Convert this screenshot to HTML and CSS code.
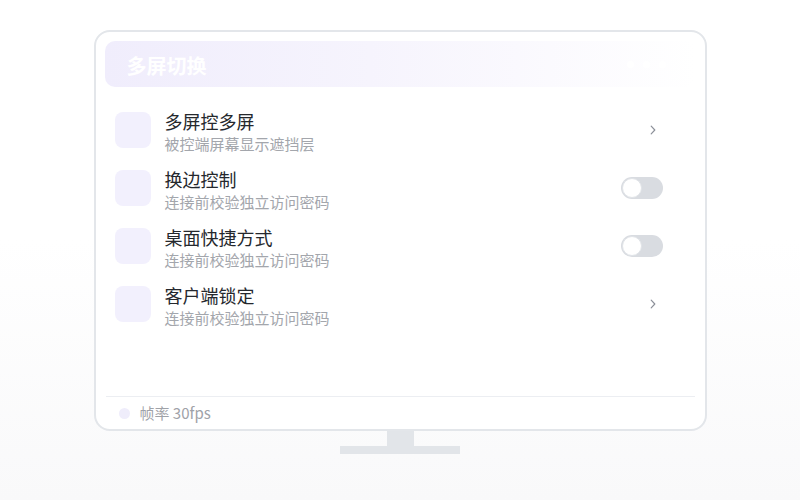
FILE: index.html
```html
<!DOCTYPE html>
<html lang="zh-CN">
<head>
<meta charset="utf-8">
<title>多屏切换</title>
<link rel="stylesheet" href="styles.css">
</head>
<body>
<div class="stage">
  <div class="monitor">
    <div class="titlebar">
      <span class="title">多屏切换</span>
      <span class="dots"><i></i><i></i><i></i></span>
    </div>
    <div class="list">
      <div class="row">
        <div class="icon"></div>
        <div class="text">
          <div class="name">多屏控多屏</div>
          <div class="desc">被控端屏幕显示遮挡层</div>
        </div>
        <svg class="chev" width="6" height="10" viewBox="0 0 6 10"><polyline points="1.2,1.2 4.8,5 1.2,8.8" fill="none" stroke="#8c9099" stroke-width="1.2" stroke-linecap="round" stroke-linejoin="round"/></svg>
      </div>
      <div class="row">
        <div class="icon"></div>
        <div class="text">
          <div class="name">换边控制</div>
          <div class="desc">连接前校验独立访问密码</div>
        </div>
        <div class="toggle"><span class="knob"></span></div>
      </div>
      <div class="row">
        <div class="icon"></div>
        <div class="text">
          <div class="name">桌面快捷方式</div>
          <div class="desc">连接前校验独立访问密码</div>
        </div>
        <div class="toggle"><span class="knob"></span></div>
      </div>
      <div class="row">
        <div class="icon"></div>
        <div class="text">
          <div class="name">客户端锁定</div>
          <div class="desc">连接前校验独立访问密码</div>
        </div>
        <svg class="chev" width="6" height="10" viewBox="0 0 6 10"><polyline points="1.2,1.2 4.8,5 1.2,8.8" fill="none" stroke="#8c9099" stroke-width="1.2" stroke-linecap="round" stroke-linejoin="round"/></svg>
      </div>
    </div>
    <div class="footer">
      <span class="fdot"></span>
      <span class="ftext">帧率 30fps</span>
    </div>
  </div>
  <div class="neck"></div>
  <div class="base"></div>
</div>
</body>
</html>
```
FILE: styles.css
```css
* { box-sizing: border-box; }
html, body { margin: 0; padding: 0; }
body {
  width: 800px;
  height: 500px;
  background: linear-gradient(180deg, #ffffff 0%, #ffffff 48%, #f9f9fa 100%);
  font-family: "Noto Sans CJK SC", "Noto Sans", sans-serif;
  overflow: hidden;
}
.stage {
  display: flex;
  flex-direction: column;
  align-items: center;
  padding-top: 30px;
}
.monitor {
  width: 613px;
  height: 401px;
  background: #ffffff;
  border: 2px solid #e3e6ea;
  border-radius: 16px;
  padding: 9px 9px 0;
  display: flex;
  flex-direction: column;
}
.titlebar {
  height: 46px;
  border-radius: 10px;
  background: linear-gradient(90deg, #f0edfc 0%, #f6f4fd 45%, #ffffff 100%);
  display: flex;
  align-items: center;
  justify-content: space-between;
  padding: 0 22px;
}
.title {
  color: #ffffff;
  font-size: 20px;
  font-weight: 700;
  line-height: 46px;
  padding-top: 4px;
}
.dots { display: flex; gap: 9px; padding-right: 8px; }
.dots i {
  display: block;
  width: 7px;
  height: 7px;
  border-radius: 50%;
  background: #ffffff;
}
.list {
  margin-top: 17px;
  display: flex;
  flex-direction: column;
}
.row {
  height: 58px;
  padding: 6px 33px 8px 10px;
  display: flex;
  align-items: flex-start;
}
.icon {
  width: 36px;
  height: 36px;
  border-radius: 8px;
  background: #f2f0fd;
  margin-top: 2px;
  flex: none;
}
.text {
  flex: 1;
  margin-left: 14px;
}
.name {
  font-size: 18px;
  line-height: 22px;
  color: #25282d;
}
.desc {
  margin-top: 2px;
  font-size: 15px;
  line-height: 20px;
  color: #a3a6ac;
}
.chev {
  margin-top: 15px;
  margin-right: 7px;
  flex: none;
}
.toggle {
  width: 42px;
  height: 22px;
  border-radius: 11px;
  background: #d9dce1;
  margin-top: 9px;
  padding: 1px;
  flex: none;
}
.knob {
  display: block;
  width: 20px;
  height: 20px;
  border-radius: 50%;
  background: #ffffff;
  border: 1px solid #e1e4e8;
}
.footer {
  margin-top: auto;
  margin-left: 1px;
  margin-right: 1px;
  height: 33px;
  border-top: 1px solid #eceef2;
  display: flex;
  align-items: center;
  padding-left: 13px;
  gap: 10px;
}
.fdot {
  width: 11px;
  height: 11px;
  border-radius: 50%;
  background: #efedfb;
}
.ftext {
  font-size: 15px;
  color: #9fa2a8;
  line-height: 20px;
}
.neck {
  width: 27px;
  height: 15px;
  background: #e2e5e9;
}
.base {
  width: 120px;
  height: 8px;
  background: #e2e5e9;
}
```
